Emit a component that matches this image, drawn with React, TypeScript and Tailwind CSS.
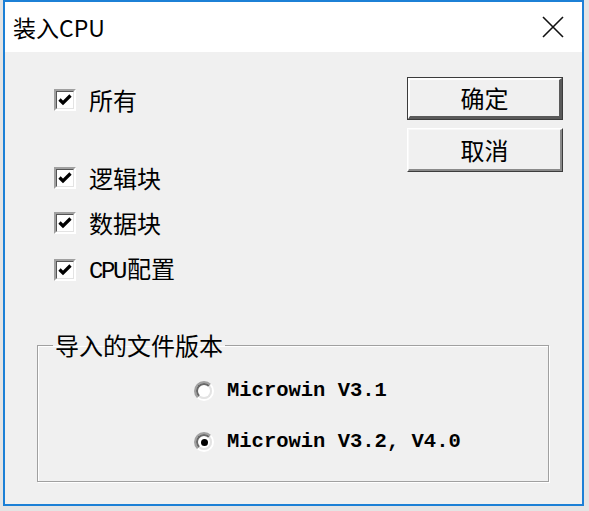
import React from "react";

const cjk = { fontFamily: '"Noto Sans CJK SC", "Noto Sans", sans-serif' };
const mono = { fontFamily: '"Liberation Mono", "Noto Sans CJK SC", monospace' };

function Check() {
  return (
    <div className="w-[22px] h-[22px] border-2 border-t-[#a0a0a0] border-l-[#a0a0a0] border-b-white border-r-white shrink-0">
      <div className="w-full h-full border border-t-[#555555] border-l-[#555555] border-b-[#e3e3e3] border-r-[#e3e3e3] bg-white flex items-center justify-center">
        <svg width="16" height="16" viewBox="0 0 16 16">
          <path d="M2.5 7.5 L6 11 L13.5 3.5" fill="none" stroke="#000" strokeWidth="3.2" strokeLinecap="butt" />
        </svg>
      </div>
    </div>
  );
}

function Row({ children, className }: { children: React.ReactNode; className?: string }) {
  return (
    <div className={"flex items-center h-[24px] gap-[13px] " + (className ?? "")}>
      <Check />
      <div className="text-[24px] leading-none text-black flex items-baseline" style={cjk}>
        {children}
      </div>
    </div>
  );
}

function Radio({ selected }: { selected?: boolean }) {
  return (
    <div className="w-[20px] h-[20px] rounded-full border-2 border-t-[#a0a0a0] border-l-[#a0a0a0] border-b-[#ffffff] border-r-[#ffffff] shrink-0">
      <div className="w-full h-full rounded-full border-2 border-t-[#696969] border-l-[#696969] border-b-[#e3e3e3] border-r-[#e3e3e3] bg-white flex items-center justify-center">
        {selected ? <div className="w-[7px] h-[7px] rounded-full bg-black" /> : null}
      </div>
    </div>
  );
}

export default function App() {
  return (
    <div className="w-[589px] h-[511px] bg-[#e4e4e4] overflow-hidden">
      <div className="ml-[3px] w-[581px] h-[506px] border-2 border-[#1c80d6] bg-[#f0f0f0] flex flex-col">
        <div className="h-[50px] bg-white flex items-center justify-between pl-[8px] pr-[18px] shrink-0">
          <span className="text-[23px] leading-none text-black" style={cjk}>
            装入CPU
          </span>
          <svg width="22" height="22" viewBox="0 0 22 22">
            <path d="M1 1 L21 21 M21 1 L1 21" stroke="#111" strokeWidth="1.6" fill="none" />
          </svg>
        </div>
        <div className="flex flex-col">
          <div className="flex justify-between pt-[25px] pl-[49px] pr-[19px]">
            <div className="flex flex-col pt-[11px]">
              <Row>所有</Row>
              <Row className="mt-[54px]">逻辑块</Row>
              <Row className="mt-[21px]">数据块</Row>
              <Row className="mt-[23px]">
                <span className="text-[24px] tracking-[-2.4px]" style={mono}>CPU</span>
                <span className="ml-[2px]">配置</span>
              </Row>
            </div>
            <div className="flex flex-col gap-[8px]">
              <button className="w-[156px] h-[43px] border border-[#3c3c3c] bg-[#f0f0f0] p-0">
                <div className="w-full h-full border-2 border-b-[3px] border-r-[3px] border-t-white border-l-white border-b-[#5a5a5a] border-r-[#5a5a5a] flex items-center justify-center text-[24px] leading-none text-black" style={cjk}>
                  确定
                </div>
              </button>
              <button className="w-[156px] h-[44px] border border-t-white border-l-white border-b-[#3c3c3c] border-r-[#3c3c3c] bg-[#f0f0f0] p-0">
                <div className="w-full h-full border border-b-2 border-r-2 border-t-[#f8f8f8] border-l-[#f8f8f8] border-b-[#8a8a8a] border-r-[#8a8a8a] flex items-center justify-center text-[24px] leading-none text-black" style={cjk}>
                  取消
                </div>
              </button>
            </div>
          </div>
          <fieldset className="mt-[51px] ml-[32px] w-[512px] h-[149px] border border-[#a0a0a0] pl-[15px] shadow-[1px_1px_0_#ffffff,inset_1px_1px_0_#ffffff] min-w-0">
            <legend className="px-[2px] text-[24px] leading-none text-black" style={cjk}>
              导入的文件版本
            </legend>
            <div className="flex flex-col ml-[141px] pt-[22px] gap-[27px]">
              <div className="flex items-center h-[24px] gap-[13px]">
                <Radio />
                <span className="text-[20.5px] leading-none font-bold text-black" style={mono}>
                  Microwin V3.1
                </span>
              </div>
              <div className="flex items-center h-[24px] gap-[13px]">
                <Radio selected />
                <span className="text-[20.5px] leading-none font-bold text-black whitespace-pre" style={mono}>
                  Microwin V3.2, V4.0
                </span>
              </div>
            </div>
          </fieldset>
        </div>
      </div>
    </div>
  );
}
